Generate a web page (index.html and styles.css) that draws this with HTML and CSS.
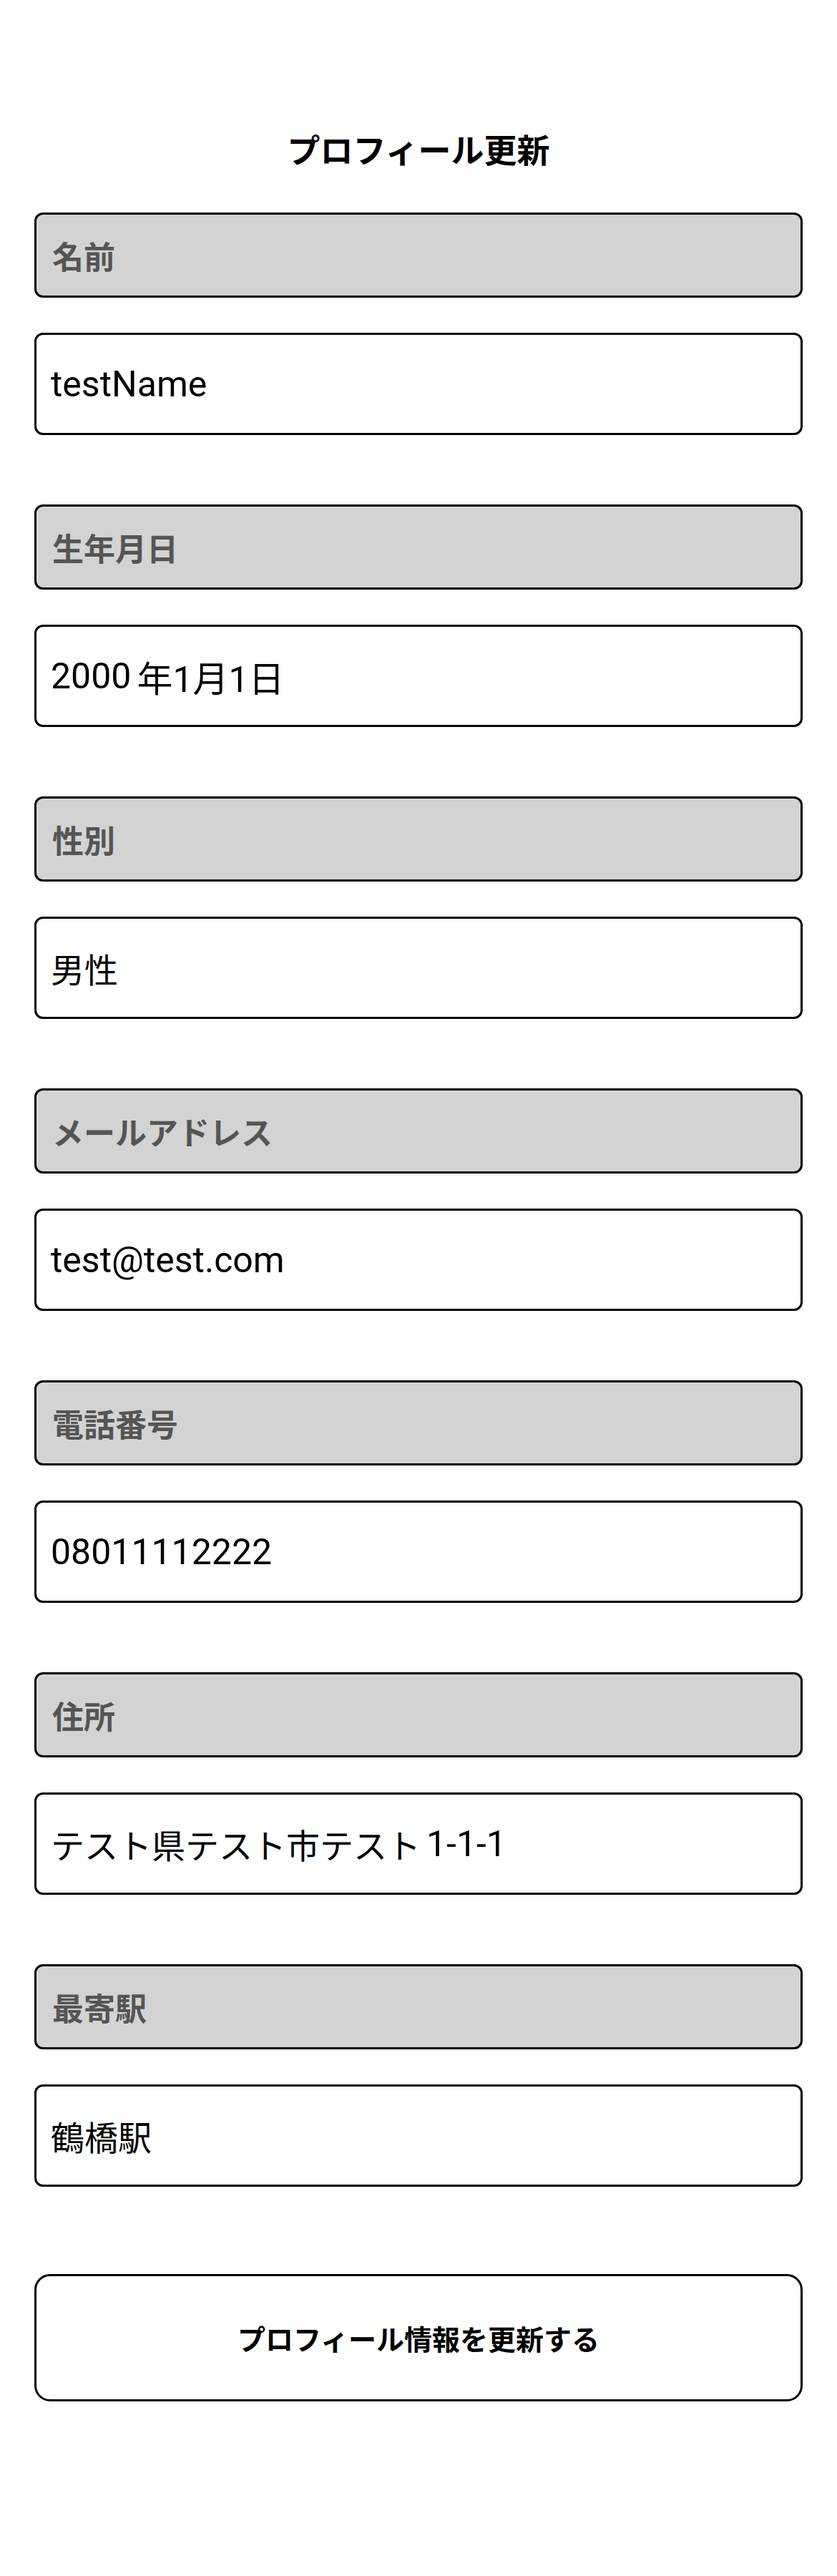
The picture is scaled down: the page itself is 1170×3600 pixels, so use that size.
FILE: index.html
```html
<!DOCTYPE html>
<html lang="ja">
<head>
<meta charset="utf-8">
<title>プロフィール更新</title>
<link rel="stylesheet" href="styles.css">
</head>
<body>
<main class="page">
  <h1 class="title">プロフィール更新</h1>
  <form class="form">
    <div class="field">
      <div class="label">名前</div>
      <div class="value">testName</div>
    </div>
    <div class="field">
      <div class="label">生年月日</div>
      <div class="value">2000<span class="cjk-gap"></span>年1月1日</div>
    </div>
    <div class="field">
      <div class="label">性別</div>
      <div class="value"><span class="ja">男性</span></div>
    </div>
    <div class="field">
      <div class="label">メールアドレス</div>
      <div class="value">test@test.com</div>
    </div>
    <div class="field">
      <div class="label">電話番号</div>
      <div class="value">08011112222</div>
    </div>
    <div class="field">
      <div class="label">住所</div>
      <div class="value"><span class="ja">テスト県テスト市テスト</span><span class="cjk-gap"></span>1-1-1</div>
    </div>
    <div class="field">
      <div class="label">最寄駅</div>
      <div class="value"><span class="ja">鶴橋駅</span></div>
    </div>
    <button type="button" class="submit">プロフィール情報を更新する</button>
  </form>
</main>
</body>
</html>
```

FILE: styles.css
```css
* {
  box-sizing: border-box;
}

html, body {
  margin: 0;
  padding: 0;
  background: #ffffff;
}

body {
  font-family: "Noto Sans CJK JP", "Noto Sans", sans-serif;
  color: #000000;
}

.page {
  padding: 180px 48px 200px;
}

.title {
  margin: 0;
  text-align: center;
  font-size: 46px;
  line-height: 55px;
  font-weight: 700;
  letter-spacing: 0;
}

.form {
  margin-top: 62px;
  display: flex;
  flex-direction: column;
  gap: 97px;
}

.field {
  display: flex;
  flex-direction: column;
  gap: 49px;
}

.label {
  height: 119px;
  border: 3px solid #000000;
  border-radius: 12px;
  background: #d3d3d3;
  color: #555555;
  font-size: 44px;
  font-weight: 600;
  display: flex;
  align-items: center;
  padding-left: 22px;
}

.value {
  height: 143px;
  border: 3px solid #000000;
  border-radius: 12px;
  background: #ffffff;
  color: #000000;
  font-family: Roboto, "Noto Sans CJK JP", sans-serif;
  font-size: 50px;
  font-weight: 400;
  display: flex;
  align-items: center;
  padding-left: 20px;
  white-space: pre;
}

.ja {
  font-family: "Noto Sans CJK JP", sans-serif;
  font-size: 47px;
}

.cjk-gap {
  display: inline-block;
  width: 8px;
}

.submit {
  margin-top: 25px;
  height: 178px;
  width: 100%;
  border: 3px solid #000000;
  border-radius: 22px;
  background: #ffffff;
  color: #000000;
  font-family: "Noto Sans CJK JP", sans-serif;
  font-size: 39px;
  font-weight: 700;
  padding: 0;
  cursor: pointer;
}
```
